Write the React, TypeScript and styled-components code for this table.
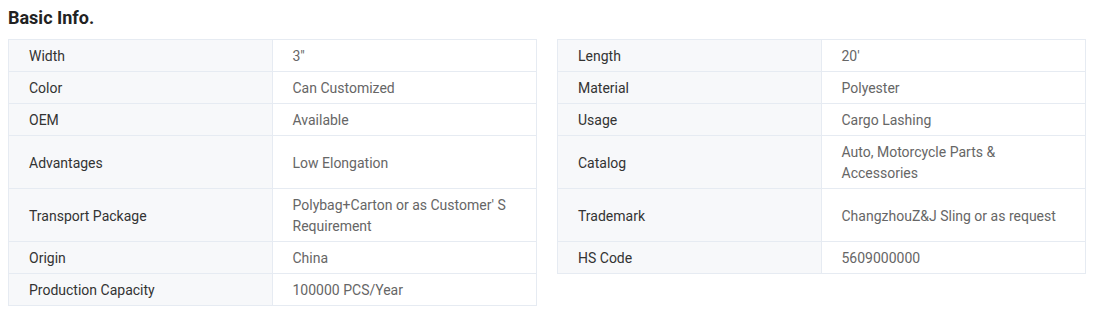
import { createGlobalStyle, styled } from "styled-components";

const GlobalStyle = createGlobalStyle`
    body {
        margin: 8px 7px 8px 8px;
        font-family: Roboto, "Liberation Sans", Arial, sans-serif;
        background: #fff;
    }
`;

const Title = styled.h2`
    font-size: 18px;
    font-weight: bold;
    color: #222;
    margin: 0 0 11px 0;
    line-height: 20px;
`;

//two columns of property pairs, rows share their height
const Grid = styled.div`
    display: grid;
    grid-template-columns: 1fr 1fr;
    column-gap: 20px;
`;

const Pair = styled.div<{ $first?: boolean }>`
    display: grid;
    grid-template-columns: 1fr 1fr;
    border: 1px solid #e6ebf2;
    border-top-width: ${(p) => (p.$first ? "1px" : "0")};
`;

const Label = styled.div`
    background-color: #f7f8fa;
    color: #333;
    font-size: 14px;
    line-height: 21px;
    padding: 6px 20px 4px;
    display: flex;
    align-items: center;
    border-right: 1px solid #e6ebf2;
`;

const Value = styled.div`
    color: #666;
    font-size: 14px;
    line-height: 21px;
    padding: 6px 20px 4px;
    display: flex;
    align-items: center;
`;

const left = [
    ["Width", "3\u2033"],
    ["Color", "Can Customized"],
    ["OEM", "Available"],
    ["Advantages", "Low Elongation"],
    ["Transport Package", "Polybag+Carton or as Customer' S Requirement"],
    ["Origin", "China"],
    ["Production Capacity", "100000 PCS/Year"],
];

const right = [
    ["Length", "20\u2032"],
    ["Material", "Polyester"],
    ["Usage", "Cargo Lashing"],
    ["Catalog", "Auto, Motorcycle Parts & Accessories"],
    ["Trademark", "ChangzhouZ&J Sling or as request"],
    ["HS Code", "5609000000"],
];

export default function App() {
    const rows = left.map((l, i) => [l, right[i]] as const);
    return (
        <>
            <GlobalStyle />
            <Title>Basic Info.</Title>
            <Grid>
                {rows.map(([l, r], i) => [
                    <Pair key={"l" + i} $first={i === 0}>
                        <Label>{l[0]}</Label>
                        <Value>{l[1]}</Value>
                    </Pair>,
                    r ? (
                        <Pair key={"r" + i} $first={i === 0}>
                            <Label>{r[0]}</Label>
                            <Value>{r[1]}</Value>
                        </Pair>
                    ) : (
                        <div key={"r" + i} />
                    ),
                ])}
            </Grid>
        </>
    );
}
